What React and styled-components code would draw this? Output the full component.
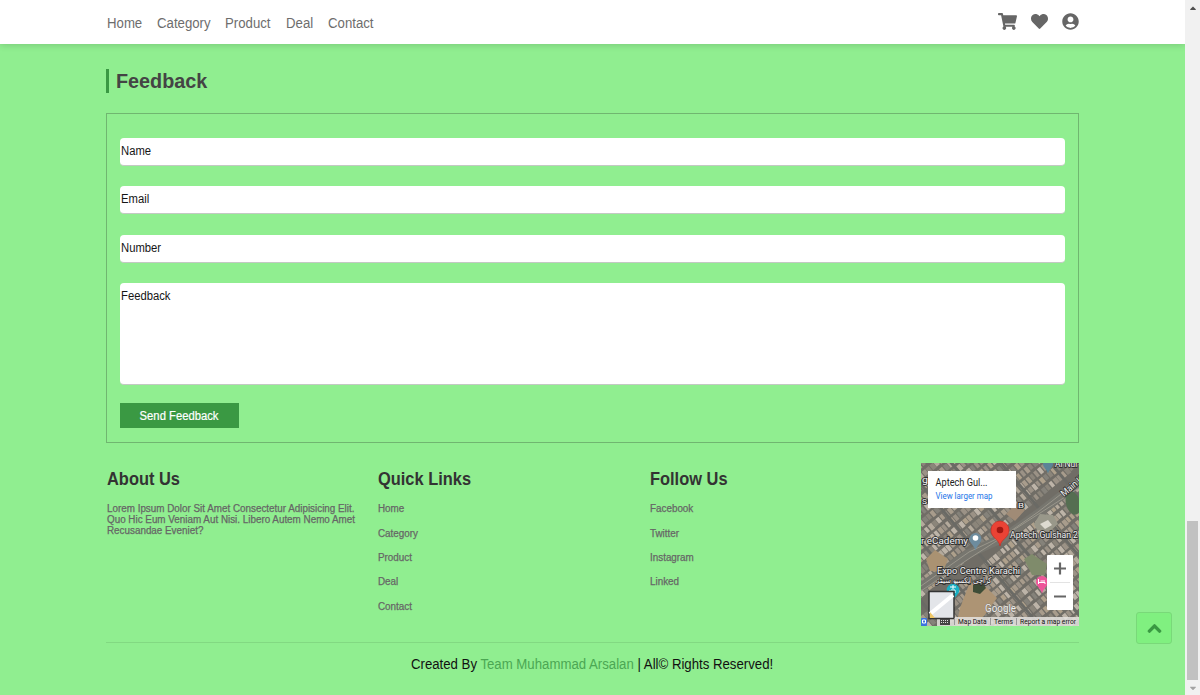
import React from "react";
import styled, { createGlobalStyle } from "styled-components";
import { FaShoppingCart, FaHeart, FaUserCircle, FaChevronUp, FaCaretUp, FaCaretDown } from "react-icons/fa";

const GlobalStyle = createGlobalStyle`
  * { box-sizing: border-box; }
  body { margin: 0; overflow: hidden; background: #90ee90; font-family: "Liberation Sans", Arial, sans-serif; }
  h1, h2, p { margin: 0; }
  a { color: inherit; text-decoration: none; }
`;

const Screen = styled.div`
  display: flex;
  height: 695px;
`;

const Page = styled.div`
  position: relative;
  flex: 1;
  display: flex;
  flex-direction: column;
  overflow: hidden;
  background: #90ee90;
`;

const Scrollbar = styled.div`
  width: 15px;
  display: flex;
  flex-direction: column;
  align-items: center;
  justify-content: space-between;
  padding: 3px 0 2px;
  background: #f1f1f1;
  svg { display: block; width: 10px; height: 10px; }
`;

const Thumb = styled.div`
  width: 11px;
  height: 159px;
  margin: auto 0 3px;
  background: #c1c1c1;
`;

const Condensed = styled.span`
  display: inline-block;
  white-space: nowrap;
  transform: scaleX(${(p) => p.$x});
  transform-origin: ${(p) => p.$from || "left"} center;
`;

const Header = styled.header`
  height: 44px;
  flex: none;
  display: flex;
  align-items: center;
  justify-content: space-between;
  padding: 0 106px 0 106.5px;
  background: #fff;
  box-shadow: 0 1px 7px rgba(0, 0, 0, 0.16);
`;

const Nav = styled.nav`
  display: flex;
  gap: 15px;
  padding-top: 1px;
  font-size: 14px;
  color: #6d6d6d;
`;

const NavLink = styled.a`
  width: ${(p) => p.$w}px;
  white-space: nowrap;
`;

const Icons = styled.div`
  display: flex;
  align-items: center;
  gap: 14px;
  padding-bottom: 1px;
  color: #666;
  svg { display: block; }
`;

const Main = styled.main`
  flex: 1;
  display: flex;
  flex-direction: column;
  padding: 25px 106px 0 106px;
`;

const Heading = styled.h1`
  height: 24px;
  padding-left: 7px;
  border-left: 3px solid #3a9943;
  font-size: 21px;
  line-height: 24px;
  color: #444;
`;

const Form = styled.form`
  height: 330px;
  margin-top: 20px;
  padding: 24px 13px 0;
  border: 1px solid #70b670;
`;

const Field = styled.div`
  height: ${(p) => p.$h || 28}px;
  margin-bottom: ${(p) => p.$gap || 20}px;
  padding: 6px 1px;
  border-radius: 4px;
  border-bottom: 1px solid #c3c9c3;
  background: #fff;
  color: #151515;
  font-size: 12px;
  line-height: 15px;
`;

const SendButton = styled.button`
  display: block;
  width: 119px;
  height: 25px;
  margin-top: -1.6px;
  padding: 0;
  border: 0;
  background: #3a9943;
  color: #fff;
  font: 12px/26px "Liberation Sans", Arial, sans-serif;
  -webkit-text-stroke: 0.2px #fff;
`;

const Footer = styled.footer`
  height: 199.5px;
  display: flex;
  justify-content: space-between;
  padding-top: 20px;
  padding-left: 0.5px;
  border-bottom: 1px solid #82d982;
`;

const Column = styled.section`
  width: 251px;
  margin-right: 20.3px;
  flex: none;
`;

const ColumnTitle = styled.h2`
  margin-top: 5px;
  font-size: 18px;
  line-height: 22px;
  color: #333;
`;

const Text = styled.p`
  margin-top: 13px;
  font-size: 10px;
  line-height: 11px;
  -webkit-text-stroke: 0.25px #666;
  color: #666;
`;

const Links = styled.div`
  display: flex;
  flex-direction: column;
  gap: 13.4px;
  margin-top: 13.2px;
  font-size: 10px;
  line-height: 11px;
  -webkit-text-stroke: 0.25px #666;
  color: #666;
`;

const MapFrame = styled.div`
  width: 158px;
  height: 163px;
  flex: none;
  svg { display: block; }
`;

const Credit = styled.p`
  margin-top: 13.500px;
  text-align: center;
  font-size: 14px;
  line-height: 16px;
  color: #111;
`;

const Team = styled.span`
  color: #4ba753;
`;

const TopButton = styled.button`
  position: absolute;
  right: 13px;
  bottom: 51px;
  width: 36px;
  height: 32px;
  display: grid;
  place-items: center;
  padding: 0;
  border: 1px solid #79d979;
  border-radius: 3px;
  background: #80f080;
  color: #3a9943;
  svg { stroke: #3a9943; stroke-width: 36px; overflow: visible; }
`;

let seed = 7;
const random = () => {
  seed = (seed * 16807) % 2147483647;
  return seed / 2147483647;
};

const roofs = ["#a89c8c", "#b4aa9c", "#9b9286", "#8b857a", "#aea08b", "#85827a", "#bdb4a8"];

const makeBlocks = (x0, x1, y0, y1) => {
  const blocks = [];
  for (let y = y0; y < y1; y += 9) {
    for (let x = x0; x < x1; x += 5) {
      blocks.push({ x, y, w: 3.2 + random() * 1.4, h: 5.5 + random() * 1.3, fill: roofs[Math.floor(random() * roofs.length)] });
    }
  }
  return blocks;
};

const north = makeBlocks(-120, 130, -140, -8);
const south = makeBlocks(-130, 130, 6, 150);

const Block = ({ b }) => <rect x={b.x} y={b.y} width={b.w} height={b.h} fill={b.fill} />;

const Label = ({ x, y, width, size = 9.5, children }) => (
  <text x={x} y={y} fontSize={size} textLength={width} lengthAdjust="spacingAndGlyphs" fill="#f4f4f4" stroke="#333" strokeWidth="1.8" paintOrder="stroke">
    {children}
  </text>
);

const Pin = ({ x, y, fill, r = 6 }) => (
  <path transform={`translate(${x} ${y})`} fill={fill} d={`M0 ${r * 1.9}C${-r * 0.25} ${r} ${-r} ${r * 0.7} ${-r} 0A${r} ${r} 0 1 1 ${r} 0C${r} ${r * 0.7} ${r * 0.25} ${r} 0 ${r * 1.9}Z`} />
);

const SatelliteMap = () => (
  <svg width="158" height="163" viewBox="0 0 158 163" fontFamily="Roboto, sans-serif">
    <rect width="158" height="163" fill="#706d66" />
    <g transform="translate(79 79) rotate(-40)">
      {north.map((b, i) => <Block key={i} b={b} />)}
    </g>
    <g transform="translate(79 79) rotate(-40)">
      {south.map((b, i) => <Block key={i} b={b} />)}
      {[-100, -62, -25, 12, 50, 88].map((x) => <rect key={x} x={x} y="-120" width="3" height="250" fill="#6a6a65" />)}
    </g>
    <path d="M0 124L47 91L84 74L118 50L158 19" fill="none" stroke="#77766f" strokeWidth="9" />
    <path d="M0 123L48 89L84 72L117 49L158 17M0 128L49 95L158 25" fill="none" stroke="#99968b" strokeWidth="1" />
    <path d="M39 145L49 119L65 124L76 135L63 153L49 163H35Z" fill="#ad9474" />
    <path d="M5 96L14 87L27 96L22 109L9 108Z" fill="#aa9272" />
    <path d="M52 122L61 119L65 125L59 131L52 129Z" fill="#3e4d37" />
    <path d="M85 51L98 38L104 47L94 58Z" fill="#a08b76" />
    <path d="M103 96L111 91L126 101L124 112L111 112Z" fill="#7f8b6b" />
    <path d="M113 61L119 51L132 52L137 61L128 69L116 67Z" fill="#99988a" />
    <path d="M119 61L127 57L131 62L124 66Z" fill="#dedbd0" />
    <ellipse cx="152" cy="40" rx="7" ry="12" fill="#556e51" transform="rotate(-15 152 40)" />
    <Pin x={127} y={1} r={5} fill="#5b8396" />
    <Label x={134} y={4} width={23}>Al Nur</Label>
    <Label x={1} y={20} width={6}>g</Label>
    <Label x={1} y={41} width={5} size={7}>S</Label>
    <Label x={97} y={45} width={6} size={7}>B</Label>
    <g transform="translate(143 34) rotate(-40)"><Label x={0} y={0} width={31}>Main Un</Label></g>
    <Pin x={54.5} y={76} r={6} fill="#6d8c9e" />
    <circle cx="54.5" cy="75" r="2.8" fill="#fff" />
    <Label x={0} y={81} width={47}>r eCademy</Label>
    <Label x={89} y={75} width={68}>Aptech Gulshan 2</Label>
    <path d="M79 83C78 76 70 75 70 67A9 9 0 0 1 88 67C88 75 80 76 79 83Z" fill="#ea4335" stroke="#c9291e" strokeWidth=".6" />
    <circle cx="79" cy="67" r="3.3" fill="#a31812" />
    <Label x={16} y={111} width={83}>Expo Centre Karachi</Label>
    <Label x={15} y={120} width={56} size={8}>كراچى ايكسپو سينٹر</Label>
    <Pin x={32} y={127} r={6.3} fill="#18afc2" />
    <path d="M29 124H35M30 127H34V130M29 127V130M32 122V126" stroke="#fff" fill="none" />
    <Pin x={121} y={119} r={6} fill="#ee559a" />
    <path d="M117.500 116V121M117.500 119.500H124V121M119.500 118H124" stroke="#fff" fill="none" />
    <text x="64" y="149" fontSize="10" textLength="31" lengthAdjust="spacingAndGlyphs" fill="#eee" stroke="#77736b" strokeWidth=".8" paintOrder="stroke">Google</text>
    <rect x="7" y="8" width="88" height="37" fill="#fff" />
    <text x="14.500" y="23" fontSize="10" textLength="52" lengthAdjust="spacingAndGlyphs" fill="#222">Aptech Gul...</text>
    <text x="14.500" y="36" fontSize="8.500" textLength="57" lengthAdjust="spacingAndGlyphs" fill="#1a73e8">View larger map</text>
    <rect x="16" y="154" width="142" height="9" fill="#e5e3df" opacity=".85" />
    <rect x="0" y="155" width="6" height="8" rx="1" fill="#3b73df" />
    <path d="M1.500 157H4.500V160H1.500Z" fill="none" stroke="#fff" />
    <rect x="8" y="128.500" width="25" height="27" fill="#e3e5e9" stroke="#333" strokeWidth="1.500" />
    <path d="M9 151L32 132" stroke="#fff" strokeWidth="4" />
    <path d="M9 149L14 155H9Z" fill="#efc767" />
    <rect x="19" y="156" width="10" height="6" fill="#444" />
    <path d="M20 157.500H28M20 159.500H28" stroke="#ddd" strokeDasharray="1 1" />
    <path d="M33.500 155V162M69.500 155V162M95.500 155V162" stroke="#999" />
    <text x="37" y="161" fontSize="7" textLength="28.500" lengthAdjust="spacingAndGlyphs" fill="#111">Map Data</text>
    <text x="73" y="161" fontSize="7" textLength="19" lengthAdjust="spacingAndGlyphs" fill="#111">Terms</text>
    <text x="99" y="161" fontSize="7" textLength="56" lengthAdjust="spacingAndGlyphs" fill="#111">Report a map error</text>
    <rect x="126" y="92" width="26" height="55" rx="1" fill="#fff" />
    <path d="M129 119.500H149" stroke="#e3e3e3" />
    <path d="M133 105.500H145M139 99.500V111.500M133 133.500H145" stroke="#666" strokeWidth="2.200" />
  </svg>
);

const navItems = [["Home", 35], ["Category", 53.5], ["Product", 45.5], ["Deal", 27.5], ["Contact", 46]];

const LinkColumn = ({ title, scale, items }) => (
  <Column>
    <ColumnTitle><Condensed $x={scale}>{title}</Condensed></ColumnTitle>
    <Links>{items.map((t) => <a key={t}><Condensed $x={0.985}>{t}</Condensed></a>)}</Links>
  </Column>
);

export default function App() {
  return (
    <Screen>
      <GlobalStyle />
      <Page>
        <Header>
          <Nav>
            {navItems.map(([name, w]) => (
              <NavLink key={name} $w={w}><Condensed $x={0.943}>{name}</Condensed></NavLink>
            ))}
          </Nav>
          <Icons>
            <FaShoppingCart size={19} />
            <FaHeart size={17} />
            <FaUserCircle size={17} />
          </Icons>
        </Header>
        <Main>
          <Heading><Condensed $x={0.942}>Feedback</Condensed></Heading>
          <Form>
            <Field><Condensed $x={0.938}>Name</Condensed></Field>
            <Field $gap={21}><Condensed $x={0.938}>Email</Condensed></Field>
            <Field><Condensed $x={0.938}>Number</Condensed></Field>
            <Field $h={102}><Condensed $x={0.938}>Feedback</Condensed></Field>
            <SendButton type="button"><Condensed $x={0.938} $from="center">Send Feedback</Condensed></SendButton>
          </Form>
          <Footer>
            <Column>
              <ColumnTitle><Condensed $x={0.912}>About Us</Condensed></ColumnTitle>
              <Text>
                <Condensed $x={0.985}>
                  Lorem Ipsum Dolor Sit Amet Consectetur Adipisicing Elit.<br />
                  Quo Hic Eum Veniam Aut Nisi. Libero Autem Nemo Amet<br />
                  Recusandae Eveniet?
                </Condensed>
              </Text>
            </Column>
            <LinkColumn title="Quick Links" scale={0.912} items={["Home", "Category", "Product", "Deal", "Contact"]} />
            <LinkColumn title="Follow Us" scale={0.912} items={["Facebook", "Twitter", "Instagram", "Linked"]} />
            <MapFrame><SatelliteMap /></MapFrame>
          </Footer>
          <Credit>
            <Condensed $x={0.943} $from="center">
              Created By <Team>Team Muhammad Arsalan</Team> | All© Rights Reserved!
            </Condensed>
          </Credit>
        </Main>
        <TopButton aria-label="Back to top"><FaChevronUp size={15} /></TopButton>
      </Page>
      <Scrollbar>
        <FaCaretUp color="#505050" />
        <Thumb />
        <FaCaretDown color="#a3a3a3" />
      </Scrollbar>
    </Screen>
  );
}
